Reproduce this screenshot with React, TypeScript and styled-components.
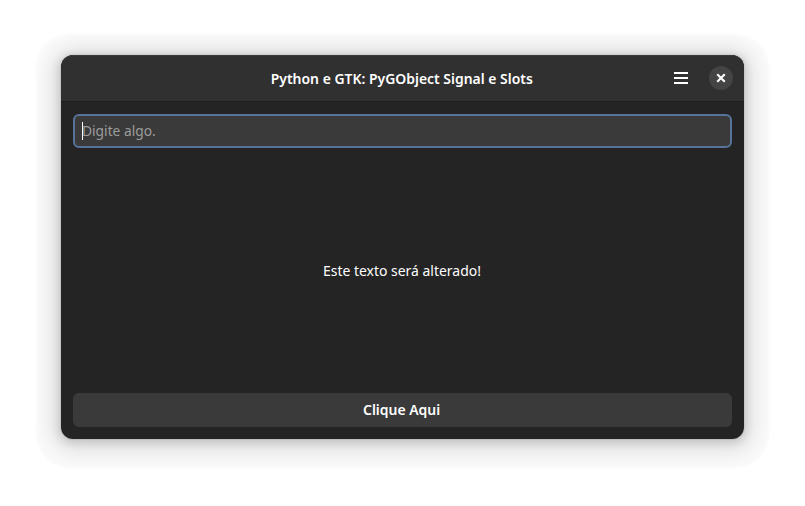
import React from "react";
import styled, { createGlobalStyle } from "styled-components";

const GlobalStyle = createGlobalStyle`
  * { box-sizing: border-box; }
  body { margin: 0; background: #fff; }
`;
const Desktop = styled.main`
  height: 506px;
  padding: 55px 61px 67px;
  font-family: "Noto Sans", "Open Sans", sans-serif;
  font-size: 14.667px;
  line-height: 20px;
  color: #fff;
`;
const Window = styled.section`
  height: 384px;
  display: flex;
  flex-direction: column;
  border-radius: 12px;
  overflow: hidden;
  background: #242424;
  box-shadow: 0 0 0 1px rgba(0,0,0,.05), 0 2px 8px 2px rgba(0,0,0,.14), 0 3px 20px 10px rgba(0,0,0,.1), 0 4px 2px 25px rgba(0,0,0,.018);
`;
const HeaderBar = styled.header`
  height: 47px;
  flex: none;
  display: grid;
  grid-template-columns: 1fr auto 1fr;
  align-items: center;
  background: #303030;
  border-bottom: 1px solid #1e1e1e;
  border-radius: 12px 12px 0 0;
  box-shadow: inset 0 1px #3b3b3b;
`;
/* Condensed lettering for the interface text. */
const Label = styled.span<{ $start?: boolean }>`
  display: inline-block;
  transform: scaleX(${p => (p.$start ? 0.94 : 0.951)});
  transform-origin: ${p => (p.$start ? "left" : "center")};
`;
const Title = styled.h1`
  grid-column: 2;
  margin: 0;
  padding-right: 1px;
  font-size: inherit;
  font-weight: 600;
`;
const Controls = styled.div`
  display: flex;
  justify-content: flex-end;
  align-items: center;
  gap: 16px;
  padding-right: 11px;
`;
const IconButton = styled.button<{ $round?: boolean }>`
  width: 24px;
  height: 24px;
  padding: 0;
  border: 0;
  border-radius: 50%;
  display: grid;
  place-items: center;
  background: ${p => (p.$round ? "#444" : "transparent")};
`;
const Content = styled.div`
  flex: 1;
  display: flex;
  flex-direction: column;
  padding: 12px;
`;
const Entry = styled.div`
  height: 34px;
  flex: none;
  display: flex;
  align-items: center;
  padding-left: 7px;
  border: 2px solid #577399;
  border-radius: 6px;
  background: #3a3a3a;
  color: #9c9c9c;

  ${Label} {
    margin-left: -1px;
    padding-bottom: 2px;
  }
`;
const Caret = styled.span`
  width: 1px;
  height: 18px;
  background: #fff;
`;
const Message = styled.p`
  flex: 1;
  margin: 0;
  padding: 0 2px 2px 0;
  display: grid;
  place-items: center;
`;
const ActionButton = styled.button`
  height: 34px;
  flex: none;
  padding: 0 1px 2px 0;
  border: 0;
  border-radius: 6px;
  background: #3a3a3a;
  color: #fff;
  font: inherit;
  font-weight: 600;
`;

export default function App() {
  return (
    <Desktop>
      <GlobalStyle />
      <Window>
        <HeaderBar>
          <Title><Label>Python e GTK: PyGObject Signal e Slots</Label></Title>
          <Controls>
            <IconButton aria-label="Menu">
              <svg width="16" height="16"><path d="M1 2h14v2H1zM1 7h14v2H1zM1 12h14v2H1z" fill="#fff" /></svg>
            </IconButton>
            <IconButton $round aria-label="Fechar">
              <svg width="16" height="16"><path d="M5 5l6 6M11 5l-6 6" stroke="#fff" strokeWidth="2.1" strokeLinecap="square" /></svg>
            </IconButton>
          </Controls>
        </HeaderBar>
        <Content>
          <Entry><Caret /><Label $start>Digite algo.</Label></Entry>
          <Message><Label>Este texto será alterado!</Label></Message>
          <ActionButton><Label>Clique Aqui</Label></ActionButton>
        </Content>
      </Window>
    </Desktop>
  );
}
